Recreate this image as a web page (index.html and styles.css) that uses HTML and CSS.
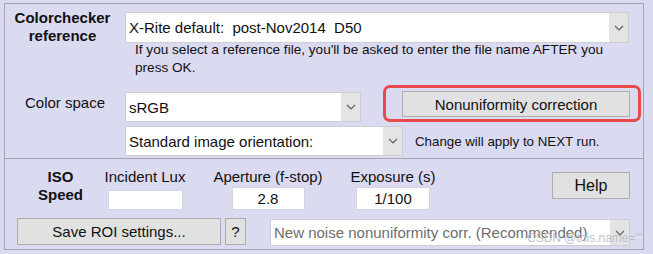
FILE: index.html
```html
<!DOCTYPE html>
<html lang="en">

<head>
  <meta charset="UTF-8">
  <title>Colorchecker settings</title>
  <link rel="stylesheet" href="styles.css">
</head>

<body>
  <div class="frame">
    <div class="panel top">
      <div class="row ref-row">
        <div class="ref-label">Colorchecker<br>reference</div>
        <div class="combo combo-ref">
          <span class="combo-text">X-Rite default:&nbsp; post-Nov2014&nbsp; D50</span>
          <span class="combo-btn"><svg width="10" height="6" viewBox="0 0 10 6"><polyline points="1,1 5,5 9,1" /></svg></span>
        </div>
      </div>
      <p class="hint">If you select a reference file, you'll be asked to enter the file name AFTER you<br>press OK.</p>
      <div class="row space-row">
        <div class="space-label">Color space</div>
        <div class="combo combo-space">
          <span class="combo-text">sRGB</span>
          <span class="combo-btn"><svg width="10" height="6" viewBox="0 0 10 6"><polyline points="1,1 5,5 9,1" /></svg></span>
        </div>
        <div class="highlight">
          <button class="btn btn-nonuni">Nonuniformity correction</button>
        </div>
      </div>
      <div class="row orient-row">
        <div class="combo combo-orient">
          <span class="combo-text">Standard image orientation:</span>
          <span class="combo-btn"><svg width="10" height="6" viewBox="0 0 10 6"><polyline points="1,1 5,5 9,1" /></svg></span>
        </div>
        <div class="orient-note">Change will apply to NEXT run.</div>
      </div>
    </div>

    <div class="panel bottom">
      <div class="row params">
        <div class="iso-label">ISO<br>Speed</div>
        <div class="param param-lux">
          <div class="param-label">Incident Lux</div>
          <div class="field field-lux"></div>
        </div>
        <div class="param param-aperture">
          <div class="param-label">Aperture (f-stop)</div>
          <div class="field field-aperture">2.8</div>
        </div>
        <div class="param param-exposure">
          <div class="param-label">Exposure (s)</div>
          <div class="field field-exposure">1/100</div>
        </div>
        <button class="btn btn-help">Help</button>
      </div>
      <div class="row actions">
        <button class="btn btn-save">Save ROI settings...</button>
        <button class="btn btn-q">?</button>
        <div class="combo combo-noise">
          <span class="combo-text">New noise nonuniformity corr. (Recommended)</span>
          <span class="combo-btn"><svg width="10" height="6" viewBox="0 0 10 6"><polyline points="1,1 5,5 9,1" /></svg></span>
        </div>
      </div>
    </div>
  </div>
  <span class="watermark">CSDN @this.name=''''</span>
</body>

</html>
```

FILE: styles.css
```css
* {
  padding: 0;
  margin: 0;
  box-sizing: border-box;
}

body {
  font-family: "Liberation Sans", Arial, sans-serif;
  font-size: 15px;
  color: #111;
  background: #dadaf0;
  width: 653px;
  height: 254px;
  overflow: hidden;
  position: relative;
}

.frame {
  margin: 3px 0 0 4px;
  width: 640px;
  border: 1px solid #a4a4b0;
}

.panel.top {
  height: 155px;
  padding-top: 8px;
  border-bottom: 1px solid #a4a4b0;
}

.panel.bottom {
  height: 90px;
  padding-top: 8px;
}

.row {
  display: flex;
  align-items: flex-start;
}

/* combo boxes */
.combo {
  display: flex;
  background: #fff;
  border: 1px solid #cdcdd4;
}

.combo-text {
  flex: 1;
  padding-left: 3px;
  display: flex;
  align-items: center;
  white-space: nowrap;
  overflow: hidden;
}

.combo-btn {
  width: 19px;
  background: #e4e4e4;
  display: flex;
  align-items: center;
  justify-content: center;
}

.combo-btn polyline {
  fill: none;
  stroke: #606060;
  stroke-width: 1.2;
}

/* colorchecker reference */
.ref-label {
  width: 115px;
  margin-top: -3px;
  text-align: center;
  font-weight: 700;
  line-height: 18px;
}

.combo-ref {
  margin-left: 5px;
  width: 504px;
  height: 31px;
}

.hint {
  margin: -4px 0 0 130px;
  font-size: 13.6px;
  line-height: 18px;
}

/* color space */
.space-row {
  margin-top: 8px;
}

.space-label {
  width: 120px;
  padding-left: 20px;
  margin-top: 8px;
  line-height: 19px;
}

.combo-space {
  margin-top: 7px;
  width: 236px;
  height: 30px;
}

.highlight {
  margin-left: 22px;
  width: 258px;
  height: 37px;
  border: 3px solid #e84a4c;
  border-radius: 7px;
  padding: 3px 8px 0 16px;
}

.btn {
  font-family: "Liberation Sans", Arial, sans-serif;
  font-size: 15px;
  color: #111;
  background: #e1e1e1;
  border: 1px solid #adadad;
}

.btn-nonuni {
  width: 228px;
  height: 26px;
}

/* orientation */
.orient-row {
  margin-top: 4px;
  align-items: center;
}

.combo-orient {
  margin-left: 120px;
  width: 278px;
  height: 30px;
}

.orient-note {
  margin-left: 12px;
  font-size: 13.3px;
}

/* ISO speed and exposure */
.iso-label {
  width: 95px;
  padding-left: 16px;
  margin-top: 1px;
  text-align: center;
  font-weight: 700;
  line-height: 18px;
}

.param {
  display: flex;
  flex-direction: column;
  align-items: center;
}

.param-label {
  line-height: 19px;
  white-space: nowrap;
}

.param-lux {
  width: 90px;
}

.param-aperture {
  width: 156px;
}

.param-exposure {
  width: 94px;
}

.field {
  background: #fff;
  border: 1px solid #d4d4dc;
  text-align: center;
  line-height: 21px;
  margin-top: 1px;
  height: 23px;
}

.field-lux {
  width: 75px;
  height: 20px;
  margin-top: 4px;
}

.field-aperture {
  width: 73px;
}

.field-exposure {
  width: 74px;
}

.btn-help {
  margin: 5px 0 0 112px;
  width: 78px;
  height: 27px;
  font-size: 16px;
}

/* bottom actions */
.actions {
  margin-top: 8px;
}

.btn-save {
  margin-left: 12px;
  width: 204px;
  height: 27px;
}

.btn-q {
  margin-left: 4px;
  width: 21px;
  height: 27px;
}

.combo-noise {
  margin: 1px 0 0 24px;
  width: 360px;
  height: 27px;
  font-size: 15px;
  color: #6e6e6e;
}

.watermark {
  position: absolute;
  left: 527px;
  top: 231px;
  font-size: 12px;
  color: rgba(185, 185, 195, 0.9);
  white-space: nowrap;
}
```
